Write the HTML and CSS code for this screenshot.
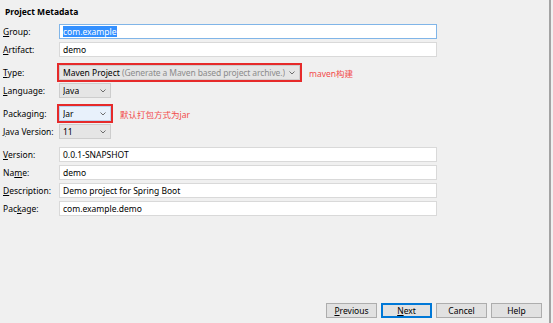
FILE: index.html
```html
<!DOCTYPE html>
<html lang="en">
<head>
  <meta charset="UTF-8">
  <title>New Project - Project Metadata</title>
  <link rel="stylesheet" href="styles.css">
</head>
<body>
  <div class="wizard">
    <div class="content">
      <h2>Project Metadata</h2>

      <div class="section">
        <div class="row">
          <label><u>G</u>roup:</label>
          <div class="field focused"><span class="sel">com.example</span></div>
        </div>
        <div class="row">
          <label><u>A</u>rtifact:</label>
          <div class="field">demo</div>
        </div>
      </div>

      <div class="section">
        <div class="row">
          <label><u>T</u>ype:</label>
          <div class="combo combo-type marked">
            <span class="value">Maven Project <span class="hint">(Generate a Maven based project archive.)</span></span>
            <svg class="chev" width="6" height="4" viewBox="0 0 6 4"><polyline points="0.5,0.5 3,3 5.5,0.5" fill="none" stroke="#6d6d6d" stroke-width="1"/></svg>
          </div>
          <span class="note">maven构建</span>
        </div>
        <div class="row">
          <label><u>L</u>anguage:</label>
          <div class="combo combo-small">
            <span class="value">Java</span>
            <svg class="chev" width="6" height="4" viewBox="0 0 6 4"><polyline points="0.5,0.5 3,3 5.5,0.5" fill="none" stroke="#6d6d6d" stroke-width="1"/></svg>
          </div>
        </div>
      </div>

      <div class="section">
        <div class="row">
          <label>Packaging:</label>
          <div class="combo combo-small combo-light marked">
            <span class="value">Jar</span>
            <svg class="chev" width="6" height="4" viewBox="0 0 6 4"><polyline points="0.5,0.5 3,3 5.5,0.5" fill="none" stroke="#6d6d6d" stroke-width="1"/></svg>
          </div>
          <span class="note">默认打包方式为jar</span>
        </div>
        <div class="row">
          <label><u>J</u>ava Version:</label>
          <div class="combo combo-small">
            <span class="value">11</span>
            <svg class="chev" width="6" height="4" viewBox="0 0 6 4"><polyline points="0.5,0.5 3,3 5.5,0.5" fill="none" stroke="#6d6d6d" stroke-width="1"/></svg>
          </div>
        </div>
      </div>

      <div class="section">
        <div class="row">
          <label><u>V</u>ersion:</label>
          <div class="field">0.0.1-SNAPSHOT</div>
        </div>
        <div class="row">
          <label>Na<u>m</u>e:</label>
          <div class="field">demo</div>
        </div>
        <div class="row">
          <label><u>D</u>escription:</label>
          <div class="field">Demo project for Spring Boot</div>
        </div>
        <div class="row">
          <label>Pac<u>k</u>age:</label>
          <div class="field">com.example.demo</div>
        </div>
      </div>
    </div>

    <div class="buttons">
      <button><u>P</u>revious</button>
      <button class="default"><u>N</u>ext</button>
      <button>Cancel</button>
      <button>Help</button>
    </div>
  </div>
</body>
</html>
```

FILE: styles.css
```css
* { box-sizing: border-box; }
html, body {
  margin: 0;
  height: 100%;
  background: #f0f0f0;
}
body {
  font-family: 'Noto Sans', 'Noto Sans CJK SC', sans-serif;
  font-size: 8.5px;
  color: #000;
}
u { text-decoration-thickness: 1px; text-underline-offset: 1px; }

.wizard {
  width: 551px;
  height: 100%;
  border-right: 2px solid #a3a3a3;
  display: flex;
  flex-direction: column;
}
.content {
  padding: 6px 0 0 3px;
  display: flex;
  flex-direction: column;
  gap: 8px;
}
h2 {
  margin: 0 0 -2px 2px;
  font-size: 8.5px;
  line-height: 12px;
  font-weight: 700;
}
.section {
  display: flex;
  flex-direction: column;
  gap: 3px;
}
.row {
  display: flex;
  align-items: center;
  height: 15px;
}
.row label {
  width: 56px;
  flex: none;
}
.field {
  width: 378px;
  height: 15px;
  background: #fff;
  border: 1px solid #d9d9d9;
  padding: 0 3px;
  line-height: 13px;
  white-space: nowrap;
}
.field.focused { border-color: #80b5e8; }
.sel {
  background: #3390ff;
  color: #fff;
  display: inline-block;
  line-height: 11px;
}

.combo {
  height: 15px;
  background: #e5e5e5;
  border: 1px solid #cdcdcd;
  padding: 0 4px 0 3px;
  display: flex;
  align-items: center;
  justify-content: space-between;
  gap: 4px;
  white-space: nowrap;
}
.combo .value { overflow: hidden; }
.combo-type { width: 241px; }
.combo-small { width: 52px; }
.combo-light { background: #e8f1fb; border-color: #b8d3ef; }
.hint { color: #8c8c8c; letter-spacing: -0.12px; }
.chev { flex: none; }
.marked { outline: 2px solid #e62a2a; outline-offset: 0; }
.note {
  color: #f24a4a;
  margin-left: 9px;
}

.buttons {
  margin-top: auto;
  padding: 0 7px 5px 0;
  display: flex;
  justify-content: flex-end;
  gap: 4px;
}
.buttons button {
  width: 51px;
  height: 15px;
  padding: 0;
  font-family: inherit;
  font-size: 8.5px;
  color: #000;
  background: #e1e1e1;
  border: 1px solid #adadad;
}
.buttons button.default { border: 2px solid #0078d7; }
```
